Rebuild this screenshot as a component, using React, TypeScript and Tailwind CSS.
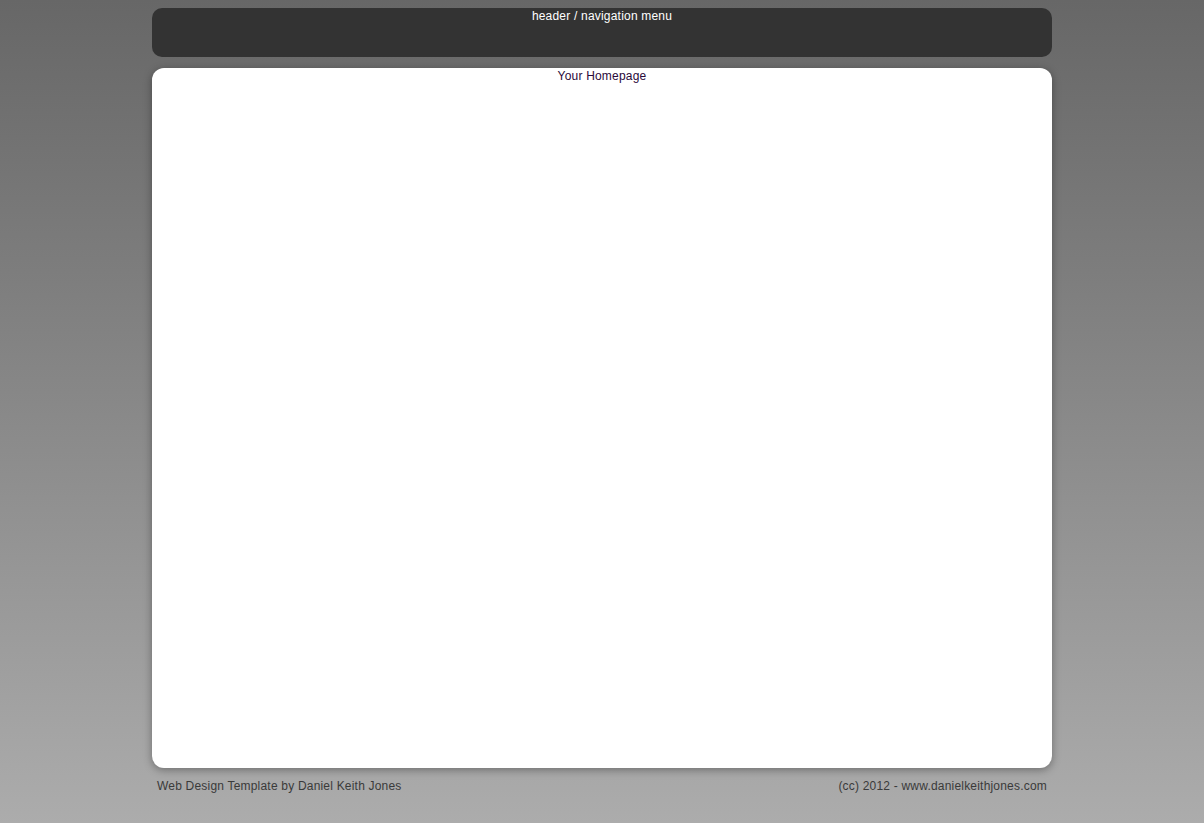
import React from 'react';

const App: React.FC = () => {
  return (
    <div className="min-h-screen bg-gradient-to-b from-[#676767] to-[#acacac] font-['Liberation_Sans',Arial,sans-serif] text-[12px] tracking-[0.2px]">
      <div className="w-[900px] mx-auto pt-[8px]">
        <header className="h-[49px] rounded-[10px] bg-[#333333] text-white text-center leading-[16px]">
          header / navigation menu
        </header>

        <main className="mt-[11px] h-[700px] rounded-[12px] bg-white text-center text-[#2a0a3a] leading-[16px] shadow-[0_2px_8px_rgba(0,0,0,0.35)]">
          Your Homepage
        </main>

        <footer className="flex justify-between px-[5px] pt-[10px] text-[#3a3a3a] leading-[16px]">
          <span>Web Design Template by Daniel Keith Jones</span>
          <span>(cc) 2012 - www.danielkeithjones.com</span>
        </footer>
      </div>
    </div>
  );
};

export default App;
